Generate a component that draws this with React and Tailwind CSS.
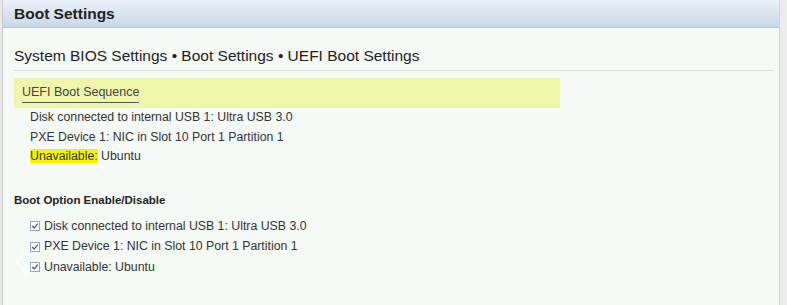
const sequence = [
  { label: 'Disk connected to internal USB 1', value: 'Ultra USB 3.0' },
  { label: 'PXE Device 1', value: 'NIC in Slot 10 Port 1 Partition 1' },
  { label: 'Unavailable', value: 'Ubuntu', marked: true },
];

const CheckBox = () => (
  <span className="flex h-[10px] w-[10px] items-center justify-center border border-[#9aa7b8] bg-white">
    <svg viewBox="0 0 10 10" className="h-[8px] w-[8px]">
      <path d="M1.5 5 L4 7.5 L8.5 2" fill="none" stroke="#3b5fa8" strokeWidth="1.6" />
    </svg>
  </span>
);

export default function App() {
  return (
    <div className="flex h-[305px] w-[787px] bg-[#f5faf7] font-['Liberation_Sans',Arial,sans-serif] text-[#333]">
      <div className="w-[3px] border-r border-[#c9c9c9] bg-[#e9e9e9]" />
      <div className="relative flex min-w-0 flex-1 flex-col">
        <div className="flex h-[28px] items-center border-b border-[#b8c8d8] bg-gradient-to-b from-[#eaf1f9] to-[#c9d8e7] pl-[11px]">
          <h1 className="text-[15.5px] font-bold text-[#222]">Boot Settings</h1>
        </div>

        <div className="pl-[11px] pr-[5px]">
          <div className="flex h-[43px] items-end border-b border-[#d9dcd9] pb-[3px] text-[15.5px] text-[#222]">
            System BIOS Settings • Boot Settings • UEFI Boot Settings
          </div>

          <div className="mt-[7px] flex h-[30px] w-[546px] items-center bg-[#eef6ac] pl-[8px]">
            <span className="border-b border-[#555] pb-[1px] text-[12.5px] text-[#444]">UEFI Boot Sequence</span>
          </div>

          <ul className="flex flex-col pl-[16px] text-[12.3px] text-[#333]">
            {sequence.map((item) => (
              <li key={item.label} className="h-[19.5px] leading-[19.5px]">
                <span className={item.marked ? 'bg-[#f4f400]' : ''}>{item.label}:</span> {item.value}
              </li>
            ))}
          </ul>

          <h2 className="mt-[25px] text-[11.5px] font-bold text-[#222]">Boot Option Enable/Disable</h2>

          <ul className="mt-[7px] flex flex-col pl-[16px] text-[12.3px] text-[#333]">
            {sequence.map((item) => (
              <li key={item.label} className="flex h-[20.5px] items-center gap-[4px]">
                <CheckBox />
                <span>
                  {item.label}: {item.value}
                </span>
              </li>
            ))}
          </ul>
        </div>

        {/* faint carousel arrow over content */}
        <svg className="absolute left-[12px] top-[248px]" width="14" height="28" viewBox="0 0 14 28">
          <path d="M12 2 L2 14 L12 26" fill="none" stroke="#ffffff" strokeWidth="2" opacity="0.8" />
        </svg>
      </div>
      <div className="w-[8px] border-l border-[#d4d4d4] bg-[#ebebeb]" />
    </div>
  );
}
